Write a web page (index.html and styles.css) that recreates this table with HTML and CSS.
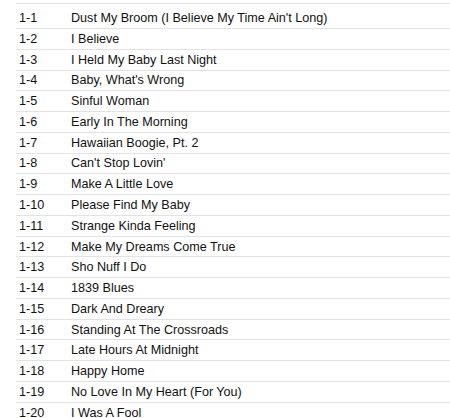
FILE: index.html
```html
<!DOCTYPE html>
<html>
<head>
<meta charset="utf-8">
<link rel="stylesheet" href="styles.css">
</head>
<body>
<div class="tracks">
  <div class="row first"><span class="num">1-1</span><span class="title">Dust My Broom (I Believe My Time Ain't Long)</span></div>
  <div class="row"><span class="num">1-2</span><span class="title">I Believe</span></div>
  <div class="row"><span class="num">1-3</span><span class="title">I Held My Baby Last Night</span></div>
  <div class="row"><span class="num">1-4</span><span class="title">Baby, What's Wrong</span></div>
  <div class="row"><span class="num">1-5</span><span class="title">Sinful Woman</span></div>
  <div class="row"><span class="num">1-6</span><span class="title">Early In The Morning</span></div>
  <div class="row"><span class="num">1-7</span><span class="title">Hawaiian Boogie, Pt. 2</span></div>
  <div class="row"><span class="num">1-8</span><span class="title">Can't Stop Lovin'</span></div>
  <div class="row"><span class="num">1-9</span><span class="title">Make A Little Love</span></div>
  <div class="row"><span class="num">1-10</span><span class="title">Please Find My Baby</span></div>
  <div class="row"><span class="num">1-11</span><span class="title">Strange Kinda Feeling</span></div>
  <div class="row"><span class="num">1-12</span><span class="title">Make My Dreams Come True</span></div>
  <div class="row"><span class="num">1-13</span><span class="title">Sho Nuff I Do</span></div>
  <div class="row"><span class="num">1-14</span><span class="title">1839 Blues</span></div>
  <div class="row"><span class="num">1-15</span><span class="title">Dark And Dreary</span></div>
  <div class="row"><span class="num">1-16</span><span class="title">Standing At The Crossroads</span></div>
  <div class="row"><span class="num">1-17</span><span class="title">Late Hours At Midnight</span></div>
  <div class="row"><span class="num">1-18</span><span class="title">Happy Home</span></div>
  <div class="row"><span class="num">1-19</span><span class="title">No Love In My Heart (For You)</span></div>
  <div class="row"><span class="num">1-20</span><span class="title">I Was A Fool</span></div>
</div>
</body>
</html>
```
FILE: styles.css
```css
html, body {
  margin: 0;
  padding: 0;
  background: #ffffff;
}
body {
  font-family: "Liberation Sans", Arial, sans-serif;
  font-size: 12.6px;
  color: #111111;
  overflow: hidden;
  height: 418px;
}
.tracks {
  margin: 3px 0 0 16px;
  border-top: 1px solid #e2e2e2;
}
.row {
  display: flex;
  align-items: center;
  height: 19.78px;
  border-bottom: 1px solid #e2e2e2;
  white-space: nowrap;
}
.row.first {
  height: 23.5px;
  padding-top: 0.5px;
  align-items: flex-end;
}
.row.first .num, .row.first .title {
  padding-bottom: 3px;
}
.num {
  width: 52px;
  padding-left: 3px;
}
.title {
  flex: 1;
}
```
